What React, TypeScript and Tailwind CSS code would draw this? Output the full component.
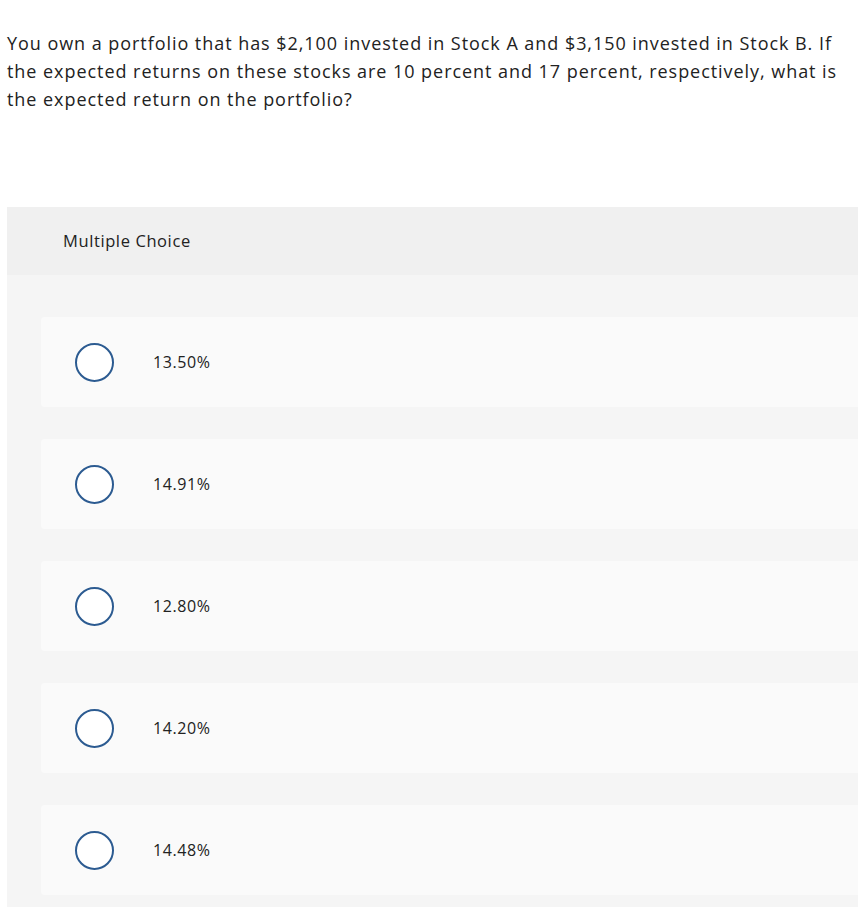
const options = ['13.50%', '14.91%', '12.80%', '14.20%', '14.48%']

export default function App() {
  return (
    <div className="min-h-screen bg-white pt-[29px] text-[#222]" style={{ fontFamily: '"Open Sans", "Liberation Sans", sans-serif' }}>
      <p className="whitespace-nowrap px-[7px] text-[18px] leading-[28px] tracking-[0.95px]">
        You own a portfolio that has $2,100 invested in Stock A and $3,150 invested in Stock B. If
        <br />
        the expected returns on these stocks are 10 percent and 17 percent, respectively, what is
        <br />
        the expected return on the portfolio?
      </p>

      <div className="ml-[7px] mt-[94px] rounded-tl-sm bg-[#f5f5f5]">
        <div className="flex h-[68px] items-center bg-[#f0f0f0] pl-[56px] text-[16.5px] tracking-[0.6px]">
          Multiple Choice
        </div>
        <div className="flex flex-col gap-[32px] pb-[12px] pl-[34px] pt-[42px]">
          {options.map((opt) => (
            <div key={opt} className="flex h-[90px] items-center rounded-l-sm bg-[#fafafa]">
              <span className="ml-[34px] h-[39px] w-[39px] rounded-full border-2 border-[#2c5b91] bg-white" />
              <span className="ml-[39px] text-[16px] tracking-[0.6px]">{opt}</span>
            </div>
          ))}
        </div>
      </div>
    </div>
  )
}
